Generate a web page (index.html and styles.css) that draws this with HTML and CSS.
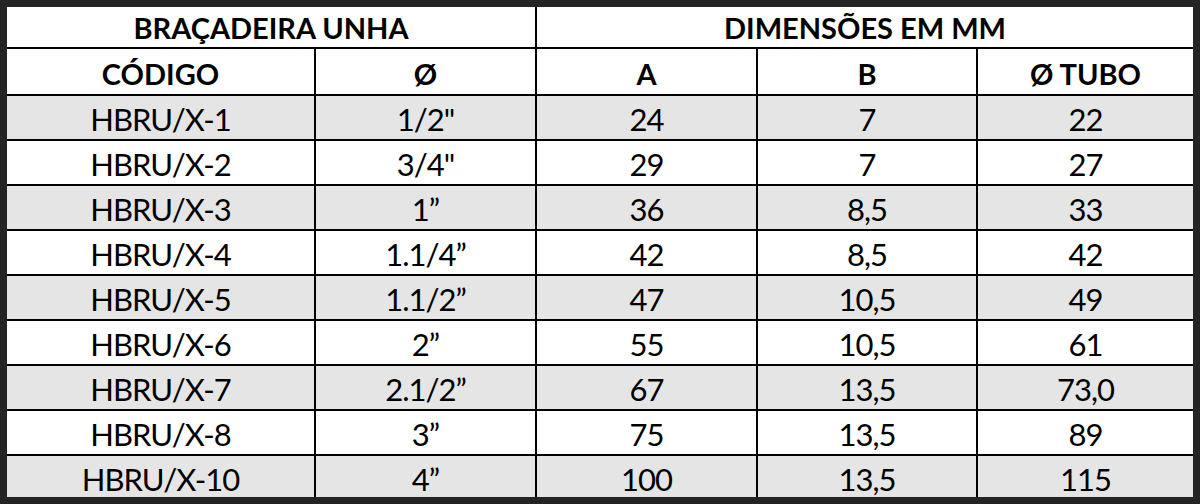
FILE: index.html
```html
<!DOCTYPE html>
<html lang="pt">
<head>
  <meta charset="UTF-8">
  <meta name="viewport" content="width=device-width, initial-scale=1.0">
  <title>Braçadeira Unha</title>
  <link rel="stylesheet" href="styles.css">
</head>
<body>
  <div class="frame">
    <table class="specs">
      <colgroup>
        <col class="c1">
        <col class="c2">
        <col class="c3">
        <col class="c4">
        <col class="c5">
      </colgroup>
      <thead>
        <tr class="group">
          <th colspan="2">BRAÇADEIRA UNHA</th>
          <th colspan="3">DIMENSÕES EM MM</th>
        </tr>
        <tr class="heads">
          <th>CÓDIGO</th>
          <th>Ø</th>
          <th>A</th>
          <th>B</th>
          <th>Ø TUBO</th>
        </tr>
      </thead>
      <tbody>
        <tr><td>HBRU/X-1</td><td>1/2"</td><td>24</td><td>7</td><td>22</td></tr>
        <tr><td>HBRU/X-2</td><td>3/4"</td><td>29</td><td>7</td><td>27</td></tr>
        <tr><td>HBRU/X-3</td><td>1”</td><td>36</td><td>8,5</td><td>33</td></tr>
        <tr><td>HBRU/X-4</td><td>1.1/4”</td><td>42</td><td>8,5</td><td>42</td></tr>
        <tr><td>HBRU/X-5</td><td>1.1/2”</td><td>47</td><td>10,5</td><td>49</td></tr>
        <tr><td>HBRU/X-6</td><td>2”</td><td>55</td><td>10,5</td><td>61</td></tr>
        <tr><td>HBRU/X-7</td><td>2.1/2”</td><td>67</td><td>13,5</td><td>73,0</td></tr>
        <tr><td>HBRU/X-8</td><td>3”</td><td>75</td><td>13,5</td><td>89</td></tr>
        <tr><td>HBRU/X-10</td><td>4”</td><td>100</td><td>13,5</td><td>115</td></tr>
      </tbody>
    </table>
  </div>
</body>
</html>
```

FILE: styles.css
```css
body {
  margin: 0;
  background: #fff;
  font-family: Lato, "Open Sans", sans-serif;
  color: #000;
}

.frame {
  width: 1200px;
  height: 504px;
  box-sizing: border-box;
  border: 7px solid #242424;
  overflow: hidden;
  background: #fff;
}

.specs {
  width: 1186px;
  border-collapse: collapse;
  table-layout: fixed;
}

.c1 { width: 308px; }
.c2 { width: 221px; }
.c3 { width: 221px; }
.c4 { width: 220px; }
.c5 { width: 216px; }

.specs th,
.specs td {
  border: 2px solid #000;
  text-align: center;
  vertical-align: middle;
  padding: 0;
  line-height: 1;
}

.specs tr > :first-child {
  border-left: 0;
}

.specs tr > :last-child {
  border-right: 0;
}

.specs .group th {
  border-top: 0;
}

.specs .group {
  height: 41px;
}

.specs .heads {
  height: 47px;
}

.specs tbody tr {
  height: 45px;
}

.specs th {
  font-weight: 700;
  font-size: 29px;
}

.specs .heads th {
  padding-top: 4px;
}

.specs td {
  font-size: 31px;
  letter-spacing: -1px;
  padding-top: 3px;
}

.specs tbody tr:nth-child(odd) td {
  background: #e5e5e5;
}
```
